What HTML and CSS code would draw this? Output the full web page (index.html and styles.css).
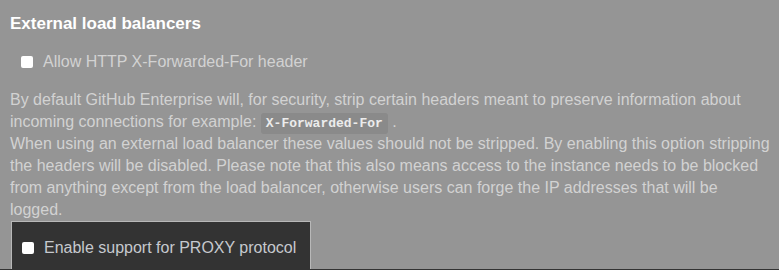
FILE: index.html
```html
<!DOCTYPE html>
<html>
<head>
<meta charset="utf-8">
<link rel="stylesheet" href="styles.css">
</head>
<body>
<div class="section">
  <h3 class="title">External load balancers</h3>
  <label class="option">
    <span class="check"></span>
    <span>Allow HTTP X-Forwarded-For header</span>
  </label>
  <p class="note">By default GitHub Enterprise will, for security, strip certain headers meant to preserve information about incoming connections for example: <code class="code">X-Forwarded-For</code> .<br>When using an external load balancer these values should not be stripped. By enabling this option stripping the headers will be disabled. Please note that this also means access to the instance needs to be blocked from anything except from the load balancer, otherwise users can forge the IP addresses that will be logged.</p>
  <div class="highlight">
    <label class="option option-hl">
      <span class="check"></span>
      <span>Enable support for PROXY protocol</span>
    </label>
  </div>
</div>
<div class="rule"></div>
</body>
</html>
```
FILE: styles.css
```css
html, body {
  margin: 0;
  padding: 0;
  background: #959595;
  height: 270px;
  overflow: hidden;
}
body {
  font-family: "Liberation Sans", Arial, sans-serif;
  color: #d2d2d2;
}
.section {
  padding: 0 7px 0 10px;
}
.title {
  margin: 0;
  padding-top: 14px;
  font-size: 17px;
  line-height: 20px;
  font-weight: bold;
  color: #ffffff;
}
.option {
  display: flex;
  align-items: center;
  gap: 10px;
  font-size: 16px;
  line-height: 20px;
  padding-left: 11px;
}
.section > .option {
  margin-top: 18px;
}
.check {
  width: 12px;
  height: 12px;
  border-radius: 2px;
  background: #ffffff;
  flex: none;
}
.note {
  margin: 17px 0 0;
  font-size: 16px;
  line-height: 22px;
}
.code {
  font-family: "Liberation Mono", "Courier New", monospace;
  font-weight: bold;
  font-size: 13px;
  line-height: 1;
  color: #ececec;
  background: #8a8a8a;
  border-radius: 3px;
  padding: 3px 5px;
}
.highlight {
  margin: 0 0 0 1px;
  width: 298px;
  height: 47px;
  background: #333333;
  border: 1px solid #b8b8b8;
  border-bottom: none;
  box-sizing: content-box;
  display: flex;
  align-items: flex-end;
}
.option-hl {
  padding-left: 10px;
  padding-bottom: 11px;
  color: #c6c9ce;
}
.rule {
  height: 1px;
  background: #333333;
}
```
